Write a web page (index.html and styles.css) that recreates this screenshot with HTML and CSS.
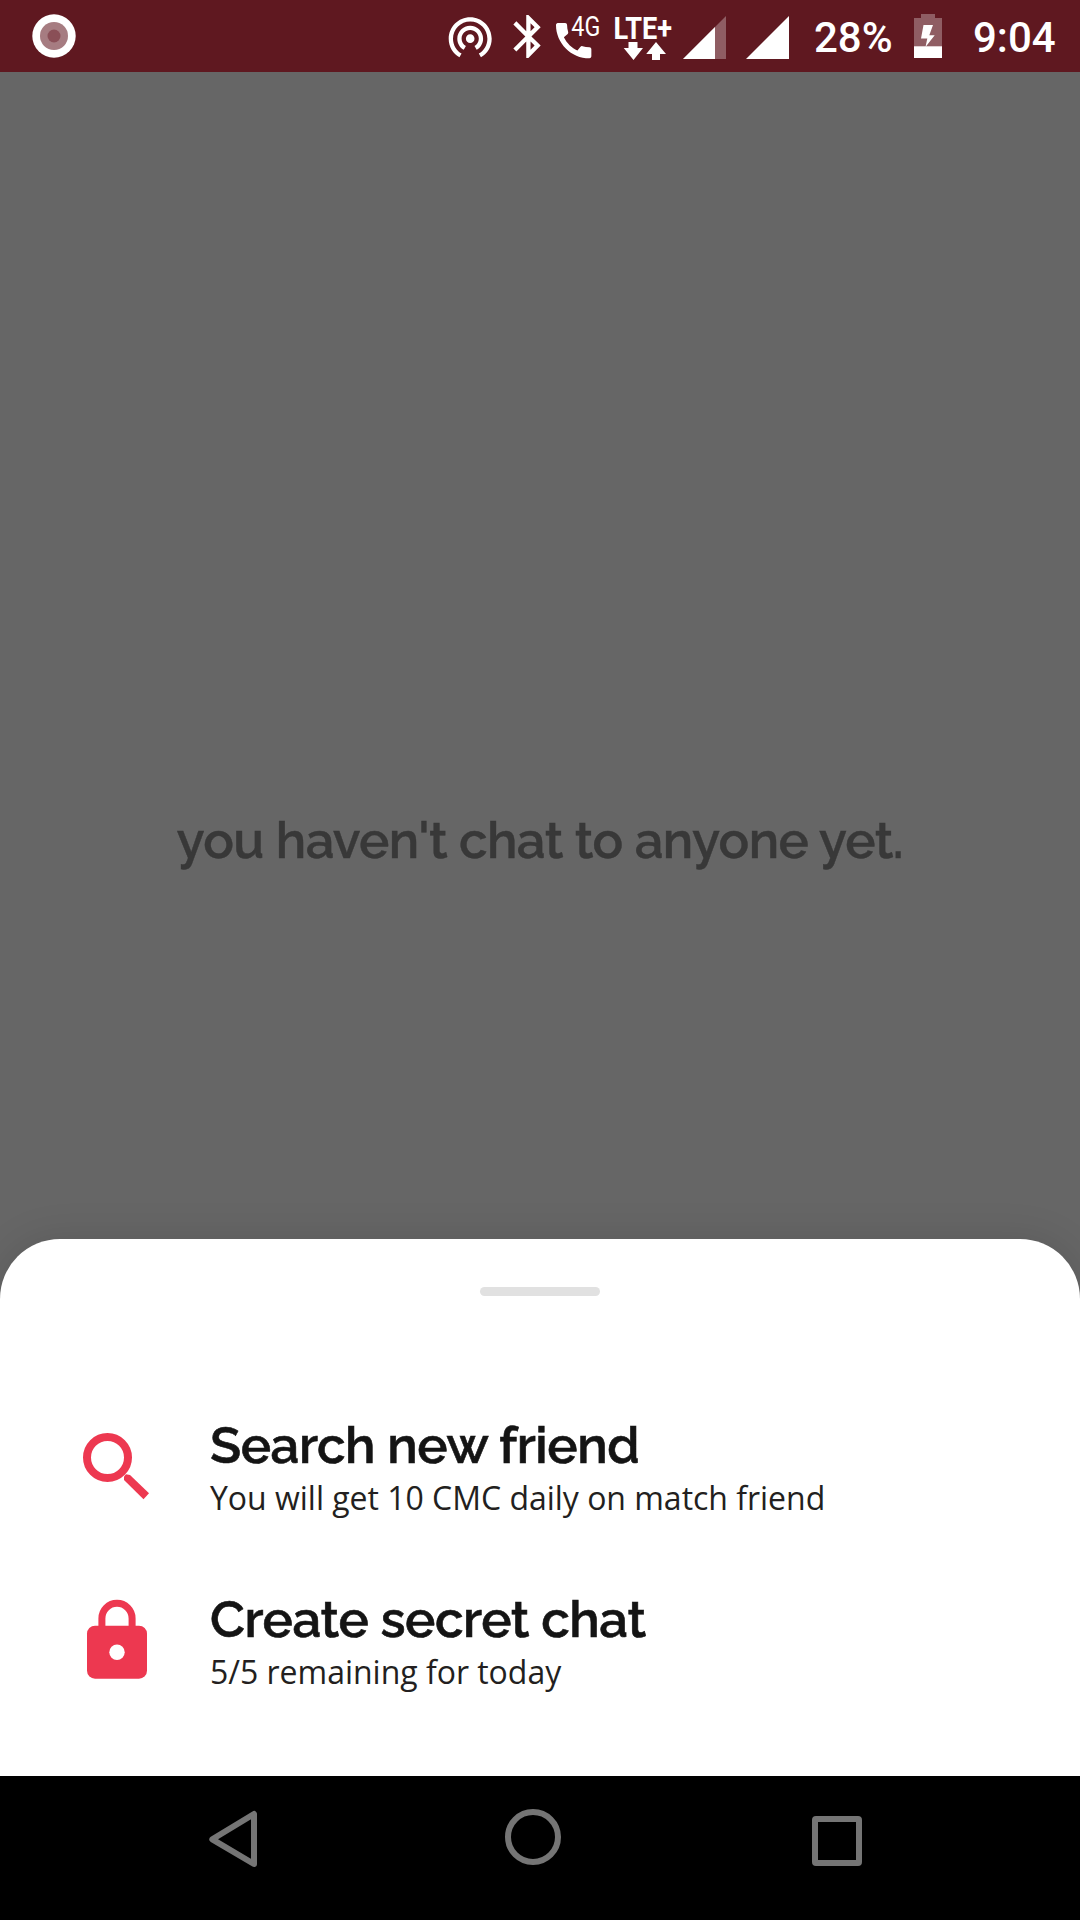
FILE: index.html
```html
<!DOCTYPE html>
<html lang="en">

<head>
    <meta charset="UTF-8">
    <meta name="viewport" content="width=device-width, initial-scale=1.0">
    <title>Chat</title>
    <link rel="stylesheet" href="styles.css">
</head>

<body>
    <header class="status-bar">
        <svg class="recorder" width="44" height="44" viewBox="0 0 44 44">
            <circle cx="22" cy="22" r="21.7" fill="#fff" />
            <circle cx="22" cy="22" r="14" fill="#a67c81" />
            <circle cx="22" cy="22" r="6.5" fill="#8a4f57" />
        </svg>

        <!-- Hotspot -->
        <svg class="hotspot" width="44" height="72" viewBox="0 0 44 72">
            <path transform="translate(-3.6 10.7) scale(2.15)" d="M12 11c-1.1 0-2 .9-2 2s.9 2 2 2 2-.9 2-2-.9-2-2-2zm6 2c0-3.31-2.69-6-6-6s-6 2.69-6 6c0 2.22 1.21 4.15 3 5.19l1-1.74c-1.19-.7-2-1.97-2-3.45 0-2.21 1.79-4 4-4s4 1.79 4 4c0 1.48-.81 2.75-2 3.45l1 1.74c1.79-1.04 3-2.97 3-5.19zM12 3C6.48 3 2 7.48 2 13c0 3.7 2.01 6.92 4.99 8.65l1-1.73C5.61 18.53 4 15.96 4 13c0-4.42 3.58-8 8-8s8 3.58 8 8c0 2.96-1.61 5.53-4 6.92l1 1.73c2.99-1.73 5-4.95 5-8.65 0-5.52-4.48-10-10-10z" />
        </svg>

        <!-- Bluetooth -->
        <svg class="bluetooth" width="28" height="72" viewBox="0 0 28 72">
            <path transform="translate(-10.4 10.6) scale(2.15)" d="M17.71 7.71L12 2h-1v7.59L6.41 5 5 6.41 10.59 12 5 17.59 6.41 19 11 14.41V22h1l5.71-5.71-4.3-4.29 4.3-4.29zM13 5.83l1.88 1.88L13 9.59V5.83zm1.88 10.46L13 18.17v-3.76l1.88 1.88z" />
        </svg>

        <!-- 4G call -->
        <svg class="call" width="50" height="72" viewBox="0 0 50 72">
            <path transform="translate(-5.9 17.1) scale(1.965)" d="M20.01 15.38c-1.23 0-2.42-.2-3.53-.56-.35-.12-.74-.03-1.01.24l-1.57 1.97c-2.83-1.35-5.48-3.9-6.89-6.83l1.95-1.66c.27-.28.35-.67.24-1.02-.37-1.11-.56-2.3-.56-3.53 0-.54-.45-.99-.99-.99H4.19C3.65 3 3 3.24 3 3.99 3 13.28 10.73 21 20.01 21c.71 0 .99-.63.99-1.18v-3.45c0-.54-.45-.99-.99-.99z" />
            <text x="15.3" y="36.3" font-size="27" textLength="29" lengthAdjust="spacingAndGlyphs">4G</text>
        </svg>

        <!-- LTE+ with data arrows -->
        <svg class="lte" width="64" height="72" viewBox="-4 0 64 72">
            <text x="-1.5" y="39" font-size="30.5" font-weight="700" textLength="58.5" lengthAdjust="spacingAndGlyphs">LTE+</text>
            <path d="M13.5 42h9v6h5.5L18.5 60 8.7 48h4.8zM41 42l10 12h-6v6h-8v-6h-5.8z" />
        </svg>

        <!-- Signal, SIM 1 -->
        <svg class="signal" width="43" height="72" viewBox="0 0 43 72">
            <path d="M43 16v43H0z" fill-opacity=".3" />
            <path d="M32 27v32H0z" />
        </svg>

        <!-- Signal, SIM 2 -->
        <svg class="signal-full" width="43" height="72" viewBox="0 0 43 72">
            <path d="M43 16v43H0z" />
        </svg>

        <span class="percent">28%</span>

        <!-- Charging battery -->
        <svg class="battery" width="28" height="72" viewBox="0 0 28 72">
            <path d="M7 14h14v4h7v40H0V18h7z" fill-opacity=".3" />
            <path d="M0 46.3h28V58H0z" />
            <path d="M9.5 25H19l-3.7 10.3h5.4L11.5 47l1.8-8.6H7z" />
        </svg>

        <span class="clock">9:04</span>
    </header>

    <main class="chat-list">
        <p class="empty-text">you haven't chat to anyone yet.</p>
    </main>

    <section class="sheet">
        <div class="handle"></div>

        <div class="option">
            <svg class="option-icon" width="66" height="84" viewBox="0 0 66 84">
                <circle cx="24.5" cy="35.5" r="20.5" fill="none" stroke="#ed3850" stroke-width="8" />
                <path d="M41 58v-3.5l2-2.2 4 .7 19 18.3-5.5 6z" fill="#ed3850" />
            </svg>
            <div class="option-text">
                <h2 class="title">Search new friend</h2>
                <p class="subtitle">You will get 10 CMC daily on match friend</p>
            </div>
        </div>

        <div class="option">
            <svg class="option-icon" width="66" height="84" viewBox="0 0 66 84">
                <path d="M18.9 33V22.4a15.1 15.1 0 0 1 30.2 0V33" fill="none" stroke="#ed3850" stroke-width="7" />
                <rect x="4" y="29.7" width="60" height="53" rx="8" fill="#ed3850" />
                <circle cx="34" cy="56.2" r="7.7" fill="#fff" />
            </svg>
            <div class="option-text">
                <h2 class="title">Create secret chat</h2>
                <p class="subtitle">5/5 remaining for today</p>
            </div>
        </div>
    </section>

    <nav class="nav-bar">
        <svg width="48" height="58" viewBox="0 0 48 58">
            <path d="M3.3 29.3L45 4v50z" />
        </svg>
        <svg class="home" width="58" height="58" viewBox="0 0 58 58">
            <circle cx="29" cy="27" r="25" />
        </svg>
        <svg width="50" height="58" viewBox="0 0 50 58">
            <rect x="3" y="9" width="44" height="44" rx="1" />
        </svg>
    </nav>
</body>

</html>
```
FILE: styles.css
```css
* {
    margin: 0;
    padding: 0;
    box-sizing: border-box;
}

body {
    display: flex;
    flex-direction: column;
    width: 1080px;
    height: 1920px;
    background-color: #666;
    font-family: "Open Sans", sans-serif;
    overflow: hidden;
}

svg {
    display: block;
    flex-shrink: 0;
    overflow: visible;
}

/* Status bar */
.status-bar {
    display: flex;
    align-items: center;
    height: 72px;
    padding-left: 32px;
    background-color: #5f1820;
    color: #fff;
    fill: #fff;
    font-family: Roboto, sans-serif;
}

.hotspot {
    margin-left: 372px;
}

.bluetooth {
    margin-left: 21px;
}

.call {
    margin-left: 15px;
}

.lte {
    margin-left: 5px;
}

.signal {
    margin-left: 8px;
}

.signal-full {
    margin-left: 20px;
}

.percent,
.clock {
    padding-top: 3px;
    font-size: 42px;
    font-weight: 500;
    line-height: 70px;
    white-space: nowrap;
}

.percent {
    width: 100px;
    margin-left: 25px;
}

.clock {
    margin-left: 31px;
}

/* Dimmed page behind the sheet */
.chat-list {
    height: 1167px;
    padding-top: 737px;
    text-align: center;
}

.empty-text {
    color: #383838;
    font-family: Raleway, Lato, sans-serif;
    font-size: 51px;
    font-weight: 600;
    letter-spacing: -0.6px;
    line-height: 62px;
    white-space: nowrap;
    -webkit-text-stroke: 0.4px #383838;
}

/* Bottom sheet */
.sheet {
    height: 537px;
    padding: 48px 83px 0;
    background-color: #fff;
    border-radius: 60px 60px 0 0;
    box-shadow: 0 0 40px rgba(0, 0, 0, 0.12);
}

.handle {
    width: 120px;
    height: 9px;
    margin: 0 auto 126px;
    border-radius: 5px;
    background-color: #e1e1e1;
}

.option {
    display: flex;
    height: 100px;
    margin-bottom: 74px;
}

.option-text {
    padding-left: 61px;
}

.title {
    color: #141414;
    font-family: Raleway, Lato, sans-serif;
    font-size: 51px;
    font-weight: 600;
    letter-spacing: -0.45px;
    line-height: 46px;
    white-space: nowrap;
    -webkit-text-stroke: 0.6px #141414;
}

.subtitle {
    padding-top: 5px;
    color: #231f20;
    font-size: 32px;
    letter-spacing: -0.02px;
    line-height: 50px;
    white-space: nowrap;
}

/* Navigation bar */
.nav-bar {
    display: flex;
    height: 144px;
    padding: 34px 0 0 209px;
    gap: 250px;
    background-color: #000;
    fill: none;
    stroke: #757575;
    stroke-width: 6;
    stroke-linejoin: round;
}

.home {
    margin-left: -3px;
}
```
